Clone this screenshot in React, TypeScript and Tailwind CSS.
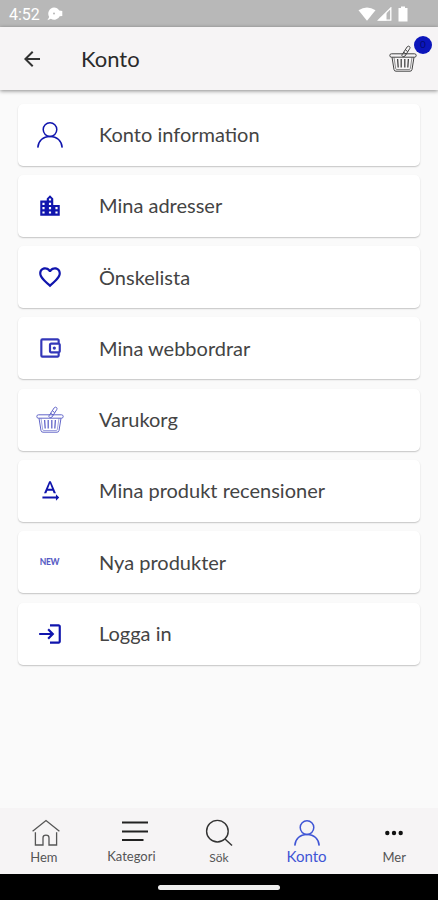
import type { ReactNode } from 'react'
import {
  MdArrowBack,
  MdFavoriteBorder,
  MdLocationCity,
  MdLogin,
  MdOutlineAccountBalanceWallet,
  MdTextRotationNone
} from 'react-icons/md'

interface IconProps {
  className?: string
}

interface MenuItem {
  label: string
  icon: ReactNode
}

function PersonIcon({ className }: IconProps) {
  return (
    <svg viewBox="0 0 28 28" fill="none" stroke="currentColor" strokeWidth="1.5" className={className}>
      <circle cx="14" cy="8.6" r="6.8" />
      <path d="M1.8 26.6C2.2 20 7 15.4 14 15.4S25.8 20 26.2 26.6" />
    </svg>
  )
}

function BasketIcon({ className }: IconProps) {
  return (
    <svg viewBox="0 0 28 28" fill="none" stroke="currentColor" strokeWidth="1" className={className}>
      <rect x="0.8" y="8.8" width="26.4" height="3.4" rx="1.7" />
      <path d="M3 12.2 5 24.6Q5.3 26.2 7 26.2H21Q22.7 26.2 23 24.6L25 12.2" />
      <path d="M5 12.4 6.7 23.6Q6.9 24.5 7.8 24.5H20.2Q21.1 24.5 21.3 23.6L23 12.4" strokeWidth="0.6" />
      <path d="M8.6 14 9.2 22.5M12.2 14V22.5M15.8 14V22.5M19.4 14 18.8 22.5" strokeWidth="1.3" />
      <path d="M13 9.8 18.2 1.8Q19.4.6 20.6 1.6 21.5 2.6 20.7 3.7L16 11Q14.8 12 13.6 11.4 12.5 10.7 13 9.8ZM16.4 4.8 18.7 6.6M14.8 7.3 17.2 9" />
    </svg>
  )
}

function HomeIcon({ className }: IconProps) {
  return (
    <svg viewBox="0 0 28 28" fill="none" stroke="currentColor" strokeWidth="1.3" className={className}>
      <path d="M.6 12.2 14 1.6 27.4 12.2" />
      <path d="M3.4 13.2V26H11V18.8Q11 16.2 14 16.2T17 18.8V26H24.6V13.2" />
    </svg>
  )
}

function SearchIcon({ className }: IconProps) {
  return (
    <svg viewBox="0 0 28 28" fill="none" stroke="currentColor" strokeWidth="1.4" className={className}>
      <circle cx="12.4" cy="12.2" r="10.8" />
      <path d="m20 20 7 6.6" />
    </svg>
  )
}

const menuItems: MenuItem[] = [
  { label: 'Konto information', icon: <PersonIcon className="h-7 w-7" /> },
  { label: 'Mina adresser', icon: <MdLocationCity className="h-[26px] w-[26px]" /> },
  { label: 'Önskelista', icon: <MdFavoriteBorder className="h-[26px] w-[26px]" /> },
  { label: 'Mina webbordrar', icon: <MdOutlineAccountBalanceWallet className="h-[26px] w-[26px] opacity-85" /> },
  { label: 'Varukorg', icon: <BasketIcon className="h-7 w-7 opacity-65" /> },
  { label: 'Mina produkt recensioner', icon: <MdTextRotationNone className="h-[26px] w-[26px]" /> },
  { label: 'Nya produkter', icon: <span className="text-[8.5px] font-black tracking-[-0.3px] opacity-70">NEW</span> },
  { label: 'Logga in', icon: <MdLogin className="h-[26px] w-[26px]" /> }
]

function StatusBar() {
  return (
    <div className="flex h-[27px] shrink-0 items-center bg-[#b8b8b8] pl-[9px] pr-[30px] text-white">
      <span className="mt-0.5 font-[Roboto,sans-serif] text-base leading-none">4:52</span>
      <svg viewBox="0 0 16 14" className="ml-[7px] h-3.5 w-4" fill="currentColor">
        <path d="M7 .5a6 6 0 0 1 5.2 3L15.3 4v5l-2.6.2A6 6 0 0 1 3.8 11.7L.4 13.2 2.2 10A6.2 6.2 0 0 1 7 .5Z" />
        <circle cx="7" cy="6.5" r="1" fill="#b8b8b8" />
      </svg>
      <div className="ml-auto flex items-center">
        <svg viewBox="0 0 18 14" className="h-3.5 w-[18px]" fill="currentColor">
          <path d="M.5 3.2Q9-2.4 17.5 3.2L9 13.7Z" />
        </svg>
        <svg viewBox="0 0 15 14" className="ml-px h-3.5 w-[15px]">
          <path d="M1.5 13.2H13.8V1Z" fill="none" stroke="currentColor" strokeWidth="1.3" />
          <path d="M1 13.5 9.5 5.5V13.5Z" fill="currentColor" />
        </svg>
        <svg viewBox="0 0 10 16" className="ml-1.5 h-4 w-2.5" fill="currentColor">
          <path d="M3 .5H7V2H9.5V15.5H.5V2H3Z" />
        </svg>
      </div>
    </div>
  )
}

function Header() {
  return (
    <header className="relative z-10 flex h-[63px] shrink-0 items-center bg-[#f6f4f5] pl-5 pr-[21px] shadow-[0_1px_4px_rgba(0,0,0,0.45)]">
      <MdArrowBack className="h-6 w-6 text-[#333]" />
      <h1 className="ml-[37px] mt-px text-[22px] font-normal leading-7 text-[#2a2a2a]">Konto</h1>
      <div className="relative ml-auto">
        <BasketIcon className="h-7 w-7 text-[#444]" />
        <span className="absolute -right-[15px] -top-[9px] flex h-[18px] w-[18px] items-center justify-center rounded-full bg-[#0c16bb] text-[10px] text-[#050b70]">
          0
        </span>
      </div>
    </header>
  )
}

function NavBar() {
  return (
    <nav className="grid h-[66px] shrink-0 grid-cols-5 bg-[#f6f4f5] text-xs leading-4 text-[#555]">
      <div className="flex flex-col items-center pt-[11px]">
        <HomeIcon className="ml-1 h-7 w-7" />
        <span className="mt-[2px] text-[13px]">Hem</span>
      </div>
      <div className="flex flex-col items-center pt-[13px]">
        <svg viewBox="0 0 26 22" className="ml-2 h-[22px] w-[26px]" stroke="#222" strokeWidth="2">
          <path d="M0 1.5H26M0 10.5H26M0 19H21.5" />
        </svg>
        <span className="mt-[5px] text-[13px]">Kategori</span>
      </div>
      <div className="flex flex-col items-center pt-[11px]">
        <SearchIcon className="h-7 w-7 text-[#333]" />
        <span className="mt-[3px]">Sök</span>
      </div>
      <div className="flex flex-col items-center pt-[11px] text-[#3f55d5]">
        <PersonIcon className="h-7 w-7" />
        <span className="mt-px text-[15px]">Konto</span>
      </div>
      <div className="flex flex-col items-center pt-[22px]">
        <svg viewBox="0 0 18 6" className="h-1.5 w-[18px]" fill="#111">
          <circle cx="2.3" cy="3" r="2.2" />
          <circle cx="9" cy="3" r="2.2" />
          <circle cx="15.7" cy="3" r="2.2" />
        </svg>
        <span className="mt-[13px] text-[13px]">Mer</span>
      </div>
    </nav>
  )
}

export default function App() {
  return (
    <div className="flex h-[900px] w-[438px] flex-col overflow-hidden bg-[#fafafa] font-[Lato,sans-serif]">
      <StatusBar />
      <Header />
      <main className="flex flex-1 flex-col gap-[9.3px] px-[18px] pt-[13.5px]">
        {menuItems.map((item) => (
          <div
            key={item.label}
            className="flex h-[62px] shrink-0 items-center rounded-[5px] bg-white shadow-[0_1px_1.5px_rgba(0,0,0,0.22)]"
          >
            <div className="flex w-[63px] items-center justify-center text-[#1015ad]">{item.icon}</div>
            <span className="mb-px ml-[18px] whitespace-nowrap text-xl text-[#444]">{item.label}</span>
          </div>
        ))}
      </main>
      <NavBar />
      <div className="flex h-[26px] shrink-0 items-center justify-center bg-black">
        <div className="h-[5px] w-[122px] rounded-full bg-[#eee]" />
      </div>
    </div>
  )
}
